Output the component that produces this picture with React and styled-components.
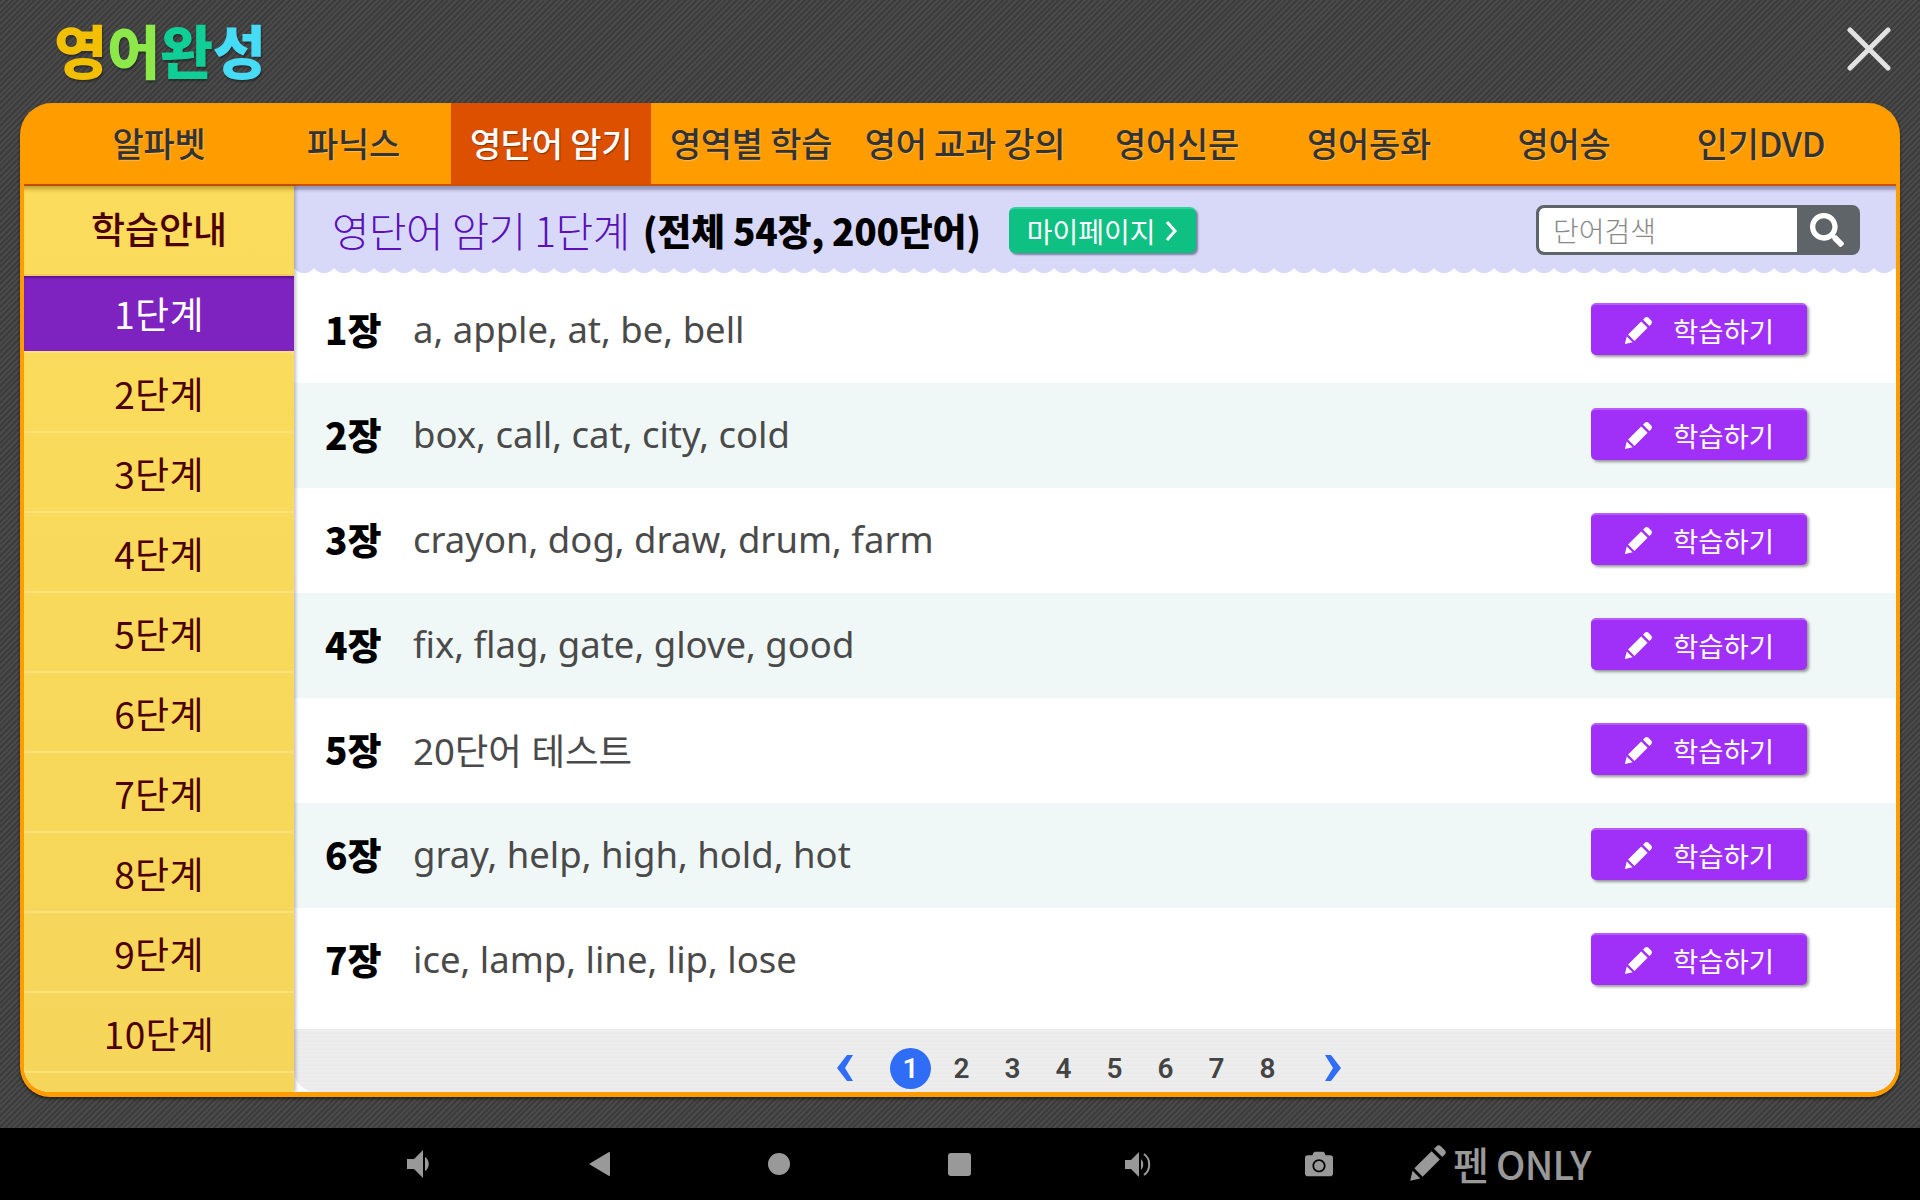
import React from "react";
import styled, { createGlobalStyle } from "styled-components";
import { FaSearch, FaCamera } from "react-icons/fa";

const GlobalStyle = createGlobalStyle`
  html, body {
    margin: 0;
    padding: 0;
    background: #000;
  }
  * {
    box-sizing: border-box;
  }
  body {
    font-family: "Noto Sans", "Noto Sans CJK KR", sans-serif;
  }
`;

const Page = styled.div`
  width: 1920px;
  height: 1200px;
  display: flex;
  flex-direction: column;
  overflow: hidden;
`;

const Backdrop = styled.div`
  height: 1128px;
  padding: 0 20px;
  background: repeating-linear-gradient(135deg, #3c3c3c 0, #3c3c3c 2px, #4a4a4a 2px, #4a4a4a 4px);
`;

const TopBar = styled.header`
  height: 103px;
  display: flex;
  align-items: center;
  justify-content: space-between;
  padding: 0 9px 5px 34px;
`;

const Logo = styled.h1`
  margin: 0;
  font-size: 58px;
  line-height: 1;
  font-weight: 900;
  letter-spacing: -0.5px;
  font-family: "Noto Sans CJK KR", sans-serif;
  text-shadow: 1px 2px 2px rgba(0, 0, 0, 0.35);
`;

const LogoChar = styled.span`
  color: ${({ color }) => color};
`;

const CloseIcon = styled.svg`
  width: 44px;
  height: 44px;
  display: block;
`;

const Panel = styled.div`
  height: 994px;
  display: flex;
  flex-direction: column;
  background: #ff9c00;
  border: solid #ff9c00;
  border-width: 0 4px 5px 4px;
  border-radius: 32px 32px 30px 30px;
  overflow: hidden;
  box-shadow: 0 2px 3px rgba(0, 0, 0, 0.5);
`;

const Nav = styled.nav`
  height: 83px;
  flex: none;
  display: flex;
  padding-left: 38px;
  border-bottom: 2px solid #c85000;
`;

const NavItem = styled.a`
  width: ${({ width }) => width}px;
  display: flex;
  align-items: center;
  justify-content: center;
  padding-bottom: 3px;
  font-family: "Noto Sans CJK KR", sans-serif;
  font-size: 34px;
  font-weight: 500;
  letter-spacing: -0.3px;
  white-space: nowrap;
  color: ${({ active }) => (active ? "#fff" : "#333")};
  background: ${({ active }) => (active ? "#dc5000" : "transparent")};
  text-shadow: ${({ active }) => (active ? "1px 1px 1px rgba(0,0,0,.4)" : "1px 1px 1px rgba(255,255,255,.3)")};
`;

const Body = styled.div`
  flex: 1;
  min-height: 0;
  display: flex;
  background: #fff;
`;

const Sidebar = styled.aside`
  position: relative;
  z-index: 1;
  width: 270px;
  flex: none;
  display: flex;
  flex-direction: column;
  background: linear-gradient(#fbdc5c, #f6d65a);
  box-shadow: 2px 0 3px rgba(60, 60, 60, 0.3);
`;

const SideHead = styled.div`
  height: 90px;
  display: flex;
  align-items: center;
  justify-content: center;
  padding-bottom: 4px;
  color: #4d0000;
  font-family: "Noto Sans CJK KR", sans-serif;
  font-size: 37px;
  font-weight: 500;
  box-shadow: inset 0 6px 4px -3px rgba(150, 110, 0, 0.55);
  border-bottom: 2px solid #f8c860;
`;

const SideItem = styled.div`
  height: ${({ active }) => (active ? 77 : 80)}px;
  flex: none;
  display: flex;
  align-items: center;
  justify-content: center;
  padding-top: ${({ active }) => (active ? 0 : 2)}px;
  padding-bottom: ${({ active }) => (active ? 2 : 0)}px;
  font-family: "Noto Sans CJK KR", sans-serif;
  font-size: 37px;
  font-weight: 400;
  letter-spacing: 0.3px;
  color: ${({ active }) => (active ? "#fff" : "#4d0000")};
  background: ${({ active }) => (active ? "#7e22c0" : "transparent")};
  border-bottom: 2px solid #fde27c;
  box-shadow: ${({ active }) => (active ? "inset 0 3px 2px -1px rgba(60,0,110,.5)" : "none")};
`;

const Main = styled.main`
  flex: 1;
  min-width: 0;
  display: flex;
  flex-direction: column;
  background: #fff;
  overflow: hidden;
`;

const Header = styled.div`
  position: relative;
  height: 87px;
  flex: none;
  display: flex;
  align-items: center;
  padding: 0 36px 0 38px;
  background: #d8d9f8;
  box-shadow: inset 0 6px 3px -2px rgba(70, 70, 120, 0.45);
  &::after {
    content: "";
    position: absolute;
    left: 0;
    right: 0;
    bottom: 0;
    height: 5px;
    background: radial-gradient(circle at 10px -7px, #d8d9f8 11.8px, #fff 12.4px) repeat-x 0 0 / 20px 5px;
  }
`;

const Title = styled.span`
  font-family: "Noto Sans CJK KR", sans-serif;
  font-size: 40.7px;
  font-weight: 300;
  color: #5a0fb8;
  letter-spacing: -0.4px;
  white-space: nowrap;
`;

const TitleCount = styled.b`
  margin-left: 13px;
  font-family: "Noto Sans CJK KR", sans-serif;
  font-size: 37px;
  font-weight: 900;
  color: #000;
  letter-spacing: -0.3px;
  white-space: nowrap;
`;

const MyPageButton = styled.a`
  margin-left: 28px;
  width: 187px;
  height: 46px;
  display: flex;
  align-items: center;
  justify-content: center;
  gap: 8px;
  border-radius: 6px;
  color: #fff;
  font-family: "Noto Sans CJK KR", sans-serif;
  font-size: 28px;
  font-weight: 400;
  white-space: nowrap;
  background: #0fc083;
  border-top: 2px solid #2ed39b;
  box-shadow: 2px 2px 2px rgba(40, 60, 90, 0.55);
`;

const Search = styled.form`
  margin-left: auto;
  width: 324px;
  height: 50px;
  display: flex;
  border: 3px solid #5f6469;
  border-radius: 8px;
  background: #5f6469;
  overflow: hidden;
`;

const SearchInput = styled.input`
  width: 258px;
  border: none;
  outline: none;
  padding: 0 14px;
  background: #fff;
  border-radius: 5px 0 0 5px;
  font-family: "Noto Sans CJK KR", sans-serif;
  font-size: 28px;
  font-weight: 300;
  &::placeholder {
    color: #888;
    opacity: 1;
  }
`;

const SearchButton = styled.div`
  flex: 1;
  display: flex;
  align-items: center;
  justify-content: center;
  color: #fff;
  font-size: 34px;
`;

const Rows = styled.div`
  flex: 1;
  min-height: 0;
  padding-top: 5px;
`;

const Row = styled.div`
  height: 105px;
  display: flex;
  align-items: center;
  padding: 0 89px 3px 31px;
  background: ${({ tinted }) => (tinted ? "#f0f8f7" : "#fff")};
`;

const RowNo = styled.b`
  width: 88px;
  flex: none;
  font-family: "Noto Sans CJK KR", sans-serif;
  font-size: 37px;
  font-weight: 900;
  color: #000;
`;

const RowWords = styled.span`
  flex: 1;
  font-size: 36.5px;
  color: #4a4a4a;
  white-space: nowrap;
`;

const StudyButton = styled.a`
  width: 216px;
  height: 52px;
  display: flex;
  align-items: center;
  justify-content: center;
  gap: 20px;
  border-radius: 5px;
  color: #fff;
  font-family: "Noto Sans CJK KR", sans-serif;
  font-size: 27.5px;
  white-space: nowrap;
  background: #a030f8;
  border-top: 2px solid #b65cfb;
  box-shadow: 2px 2px 3px rgba(0, 0, 0, 0.4);
`;

const Pager = styled.div`
  height: 63px;
  flex: none;
  display: flex;
  align-items: center;
  padding: 15px 0 0 540px;
  border-bottom-left-radius: 22px;
  background: repeating-linear-gradient(0deg, #ededed 0, #ededed 2px, #ebebeb 2px, #ebebeb 4px);
`;

const PageNo = styled.span`
  width: 41px;
  height: 41px;
  margin-right: 10px;
  display: flex;
  align-items: center;
  justify-content: center;
  border-radius: 50%;
  font-size: 28px;
  font-weight: 600;
  font-family: "Roboto", sans-serif;
  color: ${({ active }) => (active ? "#fff" : "#444")};
  background: ${({ active }) => (active ? "#2f6df6" : "transparent")};
`;

const Chevron = styled.svg`
  width: 20px;
  height: 26px;
  flex: none;
  margin: ${({ margin }) => margin};
  display: block;
`;

const BottomBar = styled.footer`
  height: 72px;
  flex: none;
  display: flex;
  align-items: center;
  padding-left: 329px;
  background: #000;
  color: #999;
`;

const BarSlot = styled.div`
  width: 180px;
  display: flex;
  align-items: center;
  justify-content: center;
`;

const BarIcon = styled.svg`
  width: ${({ w }) => w}px;
  height: ${({ h }) => h}px;
  display: block;
  fill: #999;
`;

const PenOnly = styled.div`
  display: flex;
  align-items: center;
  gap: 6px;
  padding-bottom: 2px;
  color: #999;
  font-family: "Noto Sans CJK KR", sans-serif;
  font-size: 39px;
  font-weight: 500;
  letter-spacing: -0.8px;
  white-space: nowrap;
`;

const Pencil = ({ size }) => (
  <svg width={size} height={size} viewBox="0 0 32 32" fill="currentColor">
    <path d="M1 31 L3 22.5 L9.5 29 Z" />
    <path d="M4.5 20.5 L19 6 L26 13 L11.5 27.5 Z" />
    <path d="M21 4 L23 2 Q25 0 27 2 L30 5 Q32 7 30 9 L28 11 Z" />
  </svg>
);

const navItems = [
  ["알파벳", 194],
  ["파닉스", 195],
  ["영단어 암기", 200, true],
  ["영역별 학습", 200],
  ["영어 교과 강의", 228],
  ["영어신문", 196],
  ["영어동화", 188],
  ["영어송", 202],
  ["인기DVD", 192],
];

const rows = [
  ["1장", "a, apple, at, be, bell"],
  ["2장", "box, call, cat, city, cold"],
  ["3장", "crayon, dog, draw, drum, farm"],
  ["4장", "fix, flag, gate, glove, good"],
  ["5장", "20단어 테스트"],
  ["6장", "gray, help, high, hold, hot"],
  ["7장", "ice, lamp, line, lip, lose"],
];

const logoChars = [
  ["영", "#f2c000"],
  ["어", "#8de84a"],
  ["완", "#0fce96"],
  ["성", "#46dcf5"],
];

const steps = [1, 2, 3, 4, 5, 6, 7, 8, 9, 10];
const pages = [1, 2, 3, 4, 5, 6, 7, 8];

const App = () => {
  return (
    <Page>
      <GlobalStyle />
      <Backdrop>
        <TopBar>
          <Logo>
            {logoChars.map(([c, color]) => (
              <LogoChar key={c} color={color}>{c}</LogoChar>
            ))}
          </Logo>
          <CloseIcon viewBox="0 0 44 44">
            <path d="M3 3 L41 41 M41 3 L3 41" stroke="#e2e2e2" strokeWidth="5" strokeLinecap="round" />
          </CloseIcon>
        </TopBar>
        <Panel>
          <Nav>
            {navItems.map(([label, width, active]) => (
              <NavItem key={label} width={width} active={active}>{label}</NavItem>
            ))}
          </Nav>
          <Body>
            <Sidebar>
              <SideHead>학습안내</SideHead>
              {steps.map((n) => (
                <SideItem key={n} active={n === 1}>{n}단계</SideItem>
              ))}
            </Sidebar>
            <Main>
              <Header>
                <Title>영단어 암기 1단계</Title>
                <TitleCount>(전체 54장, 200단어)</TitleCount>
                <MyPageButton>
                  마이페이지
                  <svg width="14" height="24" viewBox="0 0 14 24">
                    <path d="M3 3 L11 12 L3 21" fill="none" stroke="#fff" strokeWidth="3" />
                  </svg>
                </MyPageButton>
                <Search>
                  <SearchInput placeholder="단어검색" />
                  <SearchButton><FaSearch /></SearchButton>
                </Search>
              </Header>
              <Rows>
                {rows.map(([no, words], i) => (
                  <Row key={no} tinted={i % 2 === 1}>
                    <RowNo>{no}</RowNo>
                    <RowWords>{words}</RowWords>
                    <StudyButton>
                      <Pencil size={29} />
                      학습하기
                    </StudyButton>
                  </Row>
                ))}
              </Rows>
              <Pager>
                <Chevron viewBox="0 0 20 26" margin="0 36px 0 0">
                  <path d="M13 0 H19 L11 13 L19 26 H13 L3 13 Z" fill="#2f6df6" />
                </Chevron>
                {pages.map((p) => (
                  <PageNo key={p} active={p === 1}>{p}</PageNo>
                ))}
                <Chevron viewBox="0 0 20 26" margin="0 0 0 26px">
                  <path d="M7 0 H1 L9 13 L1 26 H7 L17 13 Z" fill="#2f6df6" />
                </Chevron>
              </Pager>
            </Main>
          </Body>
        </Panel>
      </Backdrop>
      <BottomBar>
        <BarSlot>
          <BarIcon w={24} h={28} viewBox="0 0 24 28">
            <path d="M0 9 H7 L16 0 V28 L7 19 H0 Z M18 7 C23 10 23 18 18 21 Z" />
          </BarIcon>
        </BarSlot>
        <BarSlot>
          <BarIcon w={21} h={24} viewBox="0 0 21 24">
            <path d="M0 12 L20 0 Q21 0 21 1 V23 Q21 24 20 24 Z" />
          </BarIcon>
        </BarSlot>
        <BarSlot>
          <BarIcon w={22} h={22} viewBox="0 0 22 22">
            <circle cx="11" cy="11" r="11" />
          </BarIcon>
        </BarSlot>
        <BarSlot>
          <BarIcon w={23} h={23} viewBox="0 0 23 23">
            <rect width="23" height="23" rx="3" />
          </BarIcon>
        </BarSlot>
        <BarSlot>
          <BarIcon w={28} h={27} viewBox="0 0 28 27">
            <path d="M0 9 H6 L14 1 V26 L6 18 H0 Z M16 8 C19 11 19 16 16 19 Z" />
            <path d="M19 3 C26 8 26 19 19 24" fill="none" stroke="#999" strokeWidth="2" />
          </BarIcon>
        </BarSlot>
        <BarSlot>
          <FaCamera size={28} />
        </BarSlot>
        <PenOnly>
          <Pencil size={38} />
          펜 ONLY
        </PenOnly>
      </BottomBar>
    </Page>
  );
};

export default App;
